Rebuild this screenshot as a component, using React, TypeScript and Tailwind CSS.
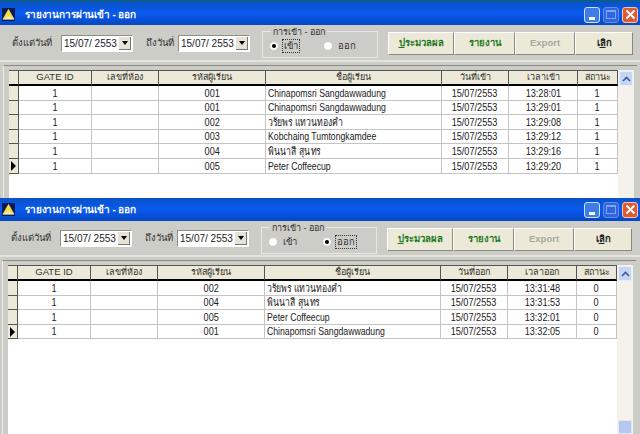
import type { ReactNode } from "react";

const COLS = [
  "w-[73px]",
  "w-[67px]",
  "w-[107px]",
  "w-[176px]",
  "w-[67px]",
  "w-[69px]",
  "w-[40px]",
];

type Row = { code: string; name: string; time: string; status: string };

const IN_ROWS: Row[] = [
  { code: "001", name: "Chinapomsri Sangdawwadung", time: "13:28:01", status: "1" },
  { code: "001", name: "Chinapomsri Sangdawwadung", time: "13:29:01", status: "1" },
  { code: "002", name: "วรัยพร แทวนทองคำ", time: "13:29:08", status: "1" },
  { code: "003", name: "Kobchaing Tumtongkamdee", time: "13:29:12", status: "1" },
  { code: "004", name: "พินนาสี สุนทร", time: "13:29:16", status: "1" },
  { code: "005", name: "Peter Coffeecup", time: "13:29:20", status: "1" },
];

const OUT_ROWS: Row[] = [
  { code: "002", name: "วรัยพร แทวนทองคำ", time: "13:31:48", status: "0" },
  { code: "004", name: "พินนาสี สุนทร", time: "13:31:53", status: "0" },
  { code: "005", name: "Peter Coffeecup", time: "13:32:01", status: "0" },
  { code: "001", name: "Chinapomsri Sangdawwadung", time: "13:32:05", status: "0" },
];

function AppIcon() {
  return (
    <svg width="13" height="13" viewBox="0 0 14 14" className="shrink-0">
      <rect width="14" height="14" fill="#0a1a50" />
      <path d="M7 1.5 L13 12 L1 12 Z" fill="#f7e22c" stroke="#fff8b0" strokeWidth="0.6" />
      <path d="M1 12 L7 9 L13 12 Z" fill="#e8e8d8" />
    </svg>
  );
}

function TitleButtons() {
  return (
    <div className="flex gap-[3px]">
      <div className="w-[16px] h-[16px] rounded-[3px] border border-[#cfe0fa] bg-[#3f7ce8] flex items-end justify-center pb-[2px]">
        <div className="w-[6px] h-[3px] bg-white" />
      </div>
      <div className="w-[16px] h-[16px] rounded-[3px] border border-[#5f8ce6] bg-[#2f66e0] flex items-center justify-center">
        <div className="w-[10px] h-[9px] border border-[#7fa6ea] border-t-2" />
      </div>
      <div className="w-[16px] h-[16px] rounded-[3px] border border-[#f0c8b8] bg-[#de5a33] flex items-center justify-center">
        <svg width="11" height="11" viewBox="0 0 11 11">
          <path d="M1.5 1.5 L9.5 9.5 M9.5 1.5 L1.5 9.5" stroke="#fff" strokeWidth="2" />
        </svg>
      </div>
    </div>
  );
}

function DateBox({ label, labelWidth }: { label: string; labelWidth: string }) {
  return (
    <div className="flex items-center mt-[1px]">
      <span className={`${labelWidth} text-[9.5px] text-[#333] whitespace-nowrap`}>{label}</span>
      <div className="w-[72px] h-[17px] bg-white border border-[#8f8f88] border-r-white border-b-white flex items-center justify-between pl-[2px] pr-[1px]">
        <span className="text-[10px] text-[#222] whitespace-nowrap">15/07/ 2553</span>
        <div className="w-[12px] h-[13px] shrink-0 bg-[#e6e3d6] border-r border-b border-[#777] flex items-center justify-center">
          <div className="border-x-[3px] border-x-transparent border-t-[4px] border-t-black" />
        </div>
      </div>
    </div>
  );
}

function Radio({ label, checked }: { label: string; checked: boolean }) {
  return (
    <div className="w-[54px] flex items-center gap-[3px]">
      <div className="w-[10px] h-[10px] rounded-full bg-white border border-[#c8c8c0] flex items-center justify-center">
        {checked && <div className="w-[4px] h-[4px] rounded-full bg-black" />}
      </div>
      <span
        className={
          checked
            ? "text-[9.5px] text-[#333] border border-dotted border-[#333] px-[1px] leading-[12px]"
            : "text-[9.5px] text-[#333] px-[2px] leading-[12px]"
        }
      >
        {label}
      </span>
    </div>
  );
}

function GroupBox({ inChecked }: { inChecked: boolean }) {
  return (
    <div className="relative w-[116px] h-[27px] border border-[#e8e8e2] mt-[4px] ml-[12px] flex items-center pl-[6px] pt-[3px]">
      <span className="absolute -top-[6px] left-[8px] px-[2px] bg-[#cdcdc8] text-[9px] leading-[12px] text-[#333]">
        การเข้า - ออก
      </span>
      <Radio label="เข้า" checked={inChecked} />
      <Radio label="ออก" checked={!inChecked} />
    </div>
  );
}

function ActionButton({ children, color, w }: { children: ReactNode; color: string; w: string }) {
  return (
    <div
      className={`${w} h-[23px] bg-[#ece9d8] border border-white border-r-[#8a8a80] border-b-[#8a8a80] flex items-center justify-center text-[9.5px] font-bold ${color}`}
    >
      {children}
    </div>
  );
}

function HeaderCell({ label, w, size }: { label: string; w: string; size?: string }) {
  return (
    <div className={`${w} h-full shrink-0 bg-[#ece9d8] border-t border-t-[#555] border-r border-b-2 border-r-[#555] border-b-black flex items-center justify-center ${size ?? "text-[9px]"} text-[#333] whitespace-nowrap`}>
      {label}
    </div>
  );
}

// ตัวอักษรในภาพแคบกว่าฟอนต์จริง จึงบีบแนวนอนลงเล็กน้อย
function BodyCell({ w, left, children }: { w: string; left?: boolean; children?: string }) {
  return (
    <div className={`${w} shrink-0 h-full border-r border-b border-[#c4c4c4] flex items-center ${left ? "justify-start pl-[2px]" : "justify-center"} text-[11px] text-[#222] whitespace-nowrap overflow-hidden`}>
      <span className={left ? "inline-block origin-left scale-x-[0.79]" : "inline-block scale-x-[0.83]"}>
        {children}
      </span>
    </div>
  );
}

function Scrollbar({ thumb }: { thumb: boolean }) {
  return (
    <div className="w-[16px] h-full shrink-0 bg-[#f4f2ea] flex flex-col justify-between">
      <div className="h-[15px] mx-[1px] mt-[1px] rounded-[2px] bg-[#c6d5f4] border border-[#e8eefb] flex items-center justify-center">
        <svg width="9" height="6" viewBox="0 0 9 6">
          <path d="M1 5 L4.5 1.5 L8 5" fill="none" stroke="#3a5a9a" strokeWidth="1.6" />
        </svg>
      </div>
      {thumb && <div className="h-[14px] mx-[1px] rounded-[2px] bg-[#b4c8f0] border border-[#dfe8fa]" />}
    </div>
  );
}

function ReportWindow({
  first,
  dateLabel,
  timeLabel,
  rows,
}: {
  first: boolean;
  dateLabel: string;
  timeLabel: string;
  rows: Row[];
}) {
  return (
    <div className={`${first ? "h-[198px]" : "h-[236px]"} flex flex-col overflow-hidden bg-[#cdcdc8]`}>
      <div
        className={`${first ? "h-[25px] border-t-2 border-[#0d5c8f] pt-[2px]" : "h-[23px]"} shrink-0 bg-gradient-to-b from-[#0a52c8] via-[#0a5af0] to-[#0648c0] flex items-center pl-[2px] pr-[2px]`}
      >
        <AppIcon />
        <span className="ml-[10px] text-[10px] tracking-[-0.15px] font-bold text-white flex-1">รายงานการผ่านเข้า - ออก</span>
        <TitleButtons />
      </div>
      <div
        className={`${first ? "h-[37px] pl-[12px] pr-[7px]" : "h-[36px] pl-[11px] pr-[8px]"} shrink-0 flex items-center border-b-2 border-[#e4e4de]`}
      >
        <DateBox label="ตั้งแต่วันที่" labelWidth="w-[49px]" />
        <div className="w-[13px]" />
        <DateBox label="ถึงวันที่" labelWidth="w-[32px]" />
        <GroupBox inChecked={first} />
        <div className="ml-auto mt-[2px] flex">
          <ActionButton color="text-[#1c7a1c]" w="w-[66px]">
            <span><u>ป</u>ระมวลผล</span>
          </ActionButton>
          <ActionButton color="text-[#1c7a1c]" w="w-[61px]">รายงาน</ActionButton>
          <ActionButton color="text-[#a8a8a0]" w="w-[60px]">Export</ActionButton>
          <ActionButton color="text-[#222]" w="w-[58px]">
            <span>เ<u>ลิ</u>ก</span>
          </ActionButton>
        </div>
      </div>
      <div
        className={`${first ? "ml-[3px] pl-[5px] mr-[3px]" : "ml-[2px] pl-[5px] mr-[4px]"} flex-1 min-h-0 mt-[3px] pt-[4px] pr-[3px] border-l border-t border-l-[#efefea] border-t-[#8a8a84] flex`}
      >
        <div className="flex-1 min-w-0 bg-white">
          <div className="h-[16px] flex">
            <div className="w-[10px] h-full shrink-0 bg-[#ece9d8] border-t border-t-[#555] border-r border-b-2 border-r-[#555] border-b-black" />
            <HeaderCell label="GATE ID" w={COLS[0]} size="text-[9.5px]" />
            <HeaderCell label="เลขที่ห้อง" w={COLS[1]} />
            <HeaderCell label="รหัสผู้เรียน" w={COLS[2]} />
            <HeaderCell label="ชื่อผู้เรียน" w={COLS[3]} />
            <HeaderCell label={dateLabel} w={COLS[4]} />
            <HeaderCell label={timeLabel} w={COLS[5]} />
            <HeaderCell label="สถานะ" w={COLS[6]} />
          </div>
          {rows.map((row, i) => (
            <div key={i} className="h-[14.6px] flex">
              <div className="w-[10px] shrink-0 h-full bg-[#ece9d8] border-r border-b border-[#555] flex items-center justify-center">
                {i === rows.length - 1 && (
                  <div className="border-y-[5px] border-y-transparent border-l-[5px] border-l-black" />
                )}
              </div>
              <BodyCell w={COLS[0]}>1</BodyCell>
              <BodyCell w={COLS[1]} />
              <BodyCell w={COLS[2]}>{row.code}</BodyCell>
              <BodyCell w={COLS[3]} left>{row.name}</BodyCell>
              <BodyCell w={COLS[4]}>15/07/2553</BodyCell>
              <BodyCell w={COLS[5]}>{row.time}</BodyCell>
              <BodyCell w={COLS[6]}>{row.status}</BodyCell>
            </div>
          ))}
        </div>
        <Scrollbar thumb={!first} />
      </div>
    </div>
  );
}

export default function App() {
  return (
    <div className="w-[640px] h-[434px] overflow-hidden font-['Liberation_Sans','Noto_Sans',sans-serif]">
      <ReportWindow first dateLabel="วันที่เข้า" timeLabel="เวลาเข้า" rows={IN_ROWS} />
      <ReportWindow first={false} dateLabel="วันที่ออก" timeLabel="เวลาออก" rows={OUT_ROWS} />
    </div>
  );
}
